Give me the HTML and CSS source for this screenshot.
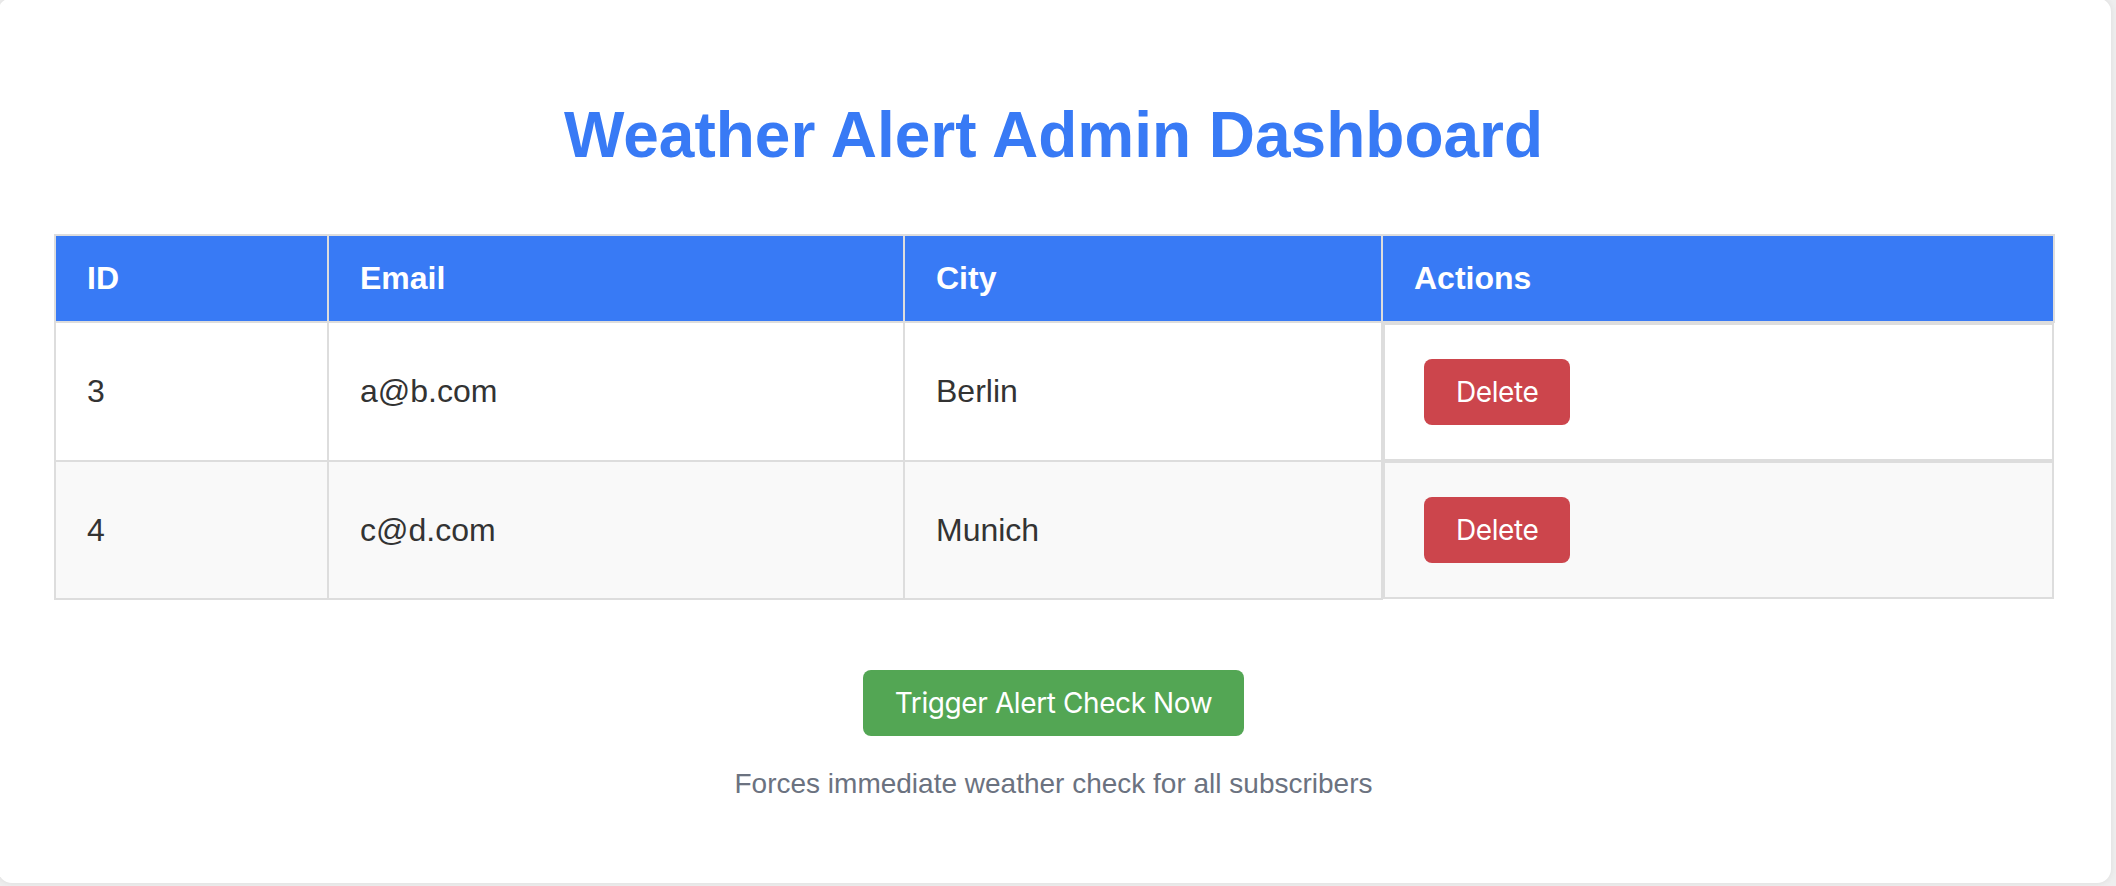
FILE: index.html
```html
<!DOCTYPE html>
<html lang="en">
<head>
<meta charset="utf-8">
<title>Weather Alert Admin Dashboard</title>
<link rel="stylesheet" href="styles.css">
</head>
<body>
<div class="card">
  <h1 class="title">Weather Alert Admin Dashboard</h1>
  <table class="subs">
    <colgroup>
      <col class="c-id"><col class="c-email"><col class="c-city"><col class="c-actions">
    </colgroup>
    <thead>
      <tr><th>ID</th><th>Email</th><th>City</th><th>Actions</th></tr>
    </thead>
    <tbody>
      <tr>
        <td>3</td><td>a@b.com</td><td>Berlin</td>
        <td class="actions"><button class="btn btn-delete">Delete</button></td>
      </tr>
      <tr>
        <td>4</td><td>c@d.com</td><td>Munich</td>
        <td class="actions"><button class="btn btn-delete">Delete</button></td>
      </tr>
    </tbody>
  </table>
  <div class="trigger">
    <button class="btn btn-trigger">Trigger Alert Check Now</button>
    <p class="hint">Forces immediate weather check for all subscribers</p>
  </div>
</div>
</body>
</html>
```
FILE: styles.css
```css
html, body {
  height: 100%;
}
body {
  margin: 0;
  background: #eeeeee;
  font-family: "Liberation Sans", Arial, Helvetica, sans-serif;
  color: #333333;
  overflow: hidden;
}
.card {
  box-sizing: border-box;
  margin: -2px 5px 0 -2px;
  height: 885px;
  background: #ffffff;
  border-radius: 14px;
  box-shadow: 0 0 6px rgba(0, 0, 0, 0.08);
  padding: 0 58px 0 56px;
  overflow: hidden;
  display: flow-root;
}
.title {
  margin: 100px 0 62px;
  text-align: center;
  font-size: 64px;
  font-weight: bold;
  color: #387af5;
  line-height: normal;
}
.subs {
  width: 100%;
  table-layout: fixed;
  border-collapse: collapse;
  font-size: 32px;
}
.c-id { width: 273px; }
.c-email { width: 576px; }
.c-city { width: 478px; }
.c-actions { width: 672px; }
.subs th {
  background: #387af5;
  color: #ffffff;
  font-weight: bold;
  text-align: left;
  padding: 24px 31px;
  border: 2px solid #dddddd;
}
.subs td {
  padding: 32px 31px;
  border: 2px solid #dddddd;
  vertical-align: middle;
  color: #333333;
}
.subs tbody tr:nth-child(even) td {
  background: #f9f9f9;
}
.subs td.actions {
  display: flex;
  align-items: center;
}
.btn {
  font-family: Inter, "Noto Sans", sans-serif;
  font-size: 28px;
  letter-spacing: -0.4px;
  color: #ffffff;
  border: none;
  border-radius: 8px;
  padding: 16px 32px;
  line-height: normal;
  cursor: pointer;
}
.btn-delete {
  background: #cc454c;
  margin: 2px 8px;
}
.trigger {
  margin-top: 70px;
  text-align: center;
}
.btn-trigger {
  background: #53a654;
}
.hint {
  margin: 32px 0 0;
  font-size: 28px;
  color: #6b7280;
}
```
